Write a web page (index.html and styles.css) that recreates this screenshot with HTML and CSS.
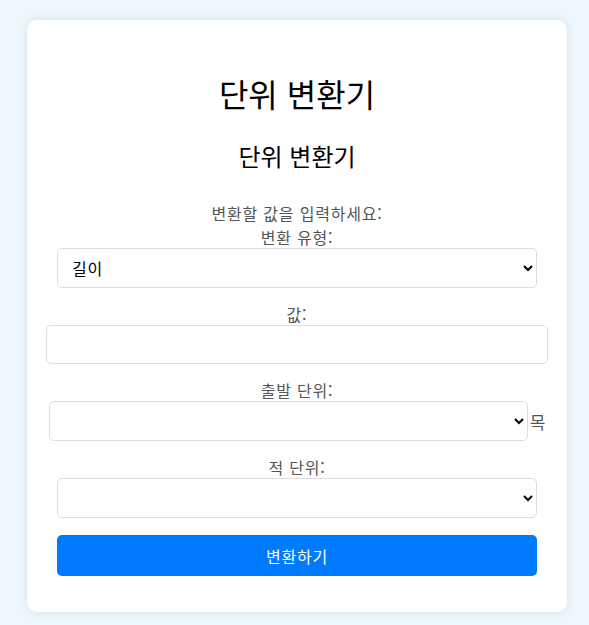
FILE: index.html
```html
<!DOCTYPE html>
<html lang="ko">
<head>
    <meta charset="UTF-8">
    <meta name="viewport" content="width=device-width, initial-scale=1.0">
    <title>단위 변환기</title>
    <link rel="stylesheet" href="styles.css">
</head>
<body>
    <div class="container">
        <h1>단위 변환기</h1>
        <h2>단위 변환기</h2>
        <form class="converter">
            <p class="intro">변환할 값을 입력하세요:</p>
            <label for="type">변환 유형:</label>
            <select id="type" class="field">
                <option>길이</option>
                <option>무게</option>
                <option>온도</option>
            </select>
            <label for="value">값:</label>
            <input type="text" id="value" class="field-wide">
            <label for="from">출발 단위:</label>
            <div class="unit-row">
                <select id="from" class="field"></select>
                <span class="stray">목</span>
            </div>
            <label for="to">적 단위:</label>
            <select id="to" class="field"></select>
            <button type="button" class="convert">변환하기</button>
        </form>
    </div>
</body>
</html>
```

FILE: styles.css
```css
body {
    font-family: "Noto Sans CJK KR", "Noto Sans", sans-serif;
    margin: 0;
    padding: 20px 0 14px;
    background-color: #eef6fe;
    color: #000;
}
.container {
    width: 540px;
    box-sizing: border-box;
    margin-left: 27px;
    padding: 30px;
    background: #ffffff;
    border-radius: 10px;
    box-shadow: 0 0 10px rgba(0, 0, 0, 0.1);
    text-align: center;
}
h1 {
    font-size: 32px;
    font-weight: normal;
    line-height: 38px;
    margin: 24px 0 0;
}
h2 {
    font-size: 24px;
    font-weight: normal;
    line-height: 29px;
    margin: 29px 0 0;
}
.converter {
    display: flex;
    flex-direction: column;
    align-items: center;
    margin-top: 32px;
}
.intro {
    margin: 0 0 2px;
    line-height: 22px;
    font-size: 16px;
    letter-spacing: 0.8px;
    color: #555;
}
label {
    line-height: 22px;
    font-size: 16px;
    letter-spacing: 0.8px;
    color: #555;
}
.field {
    width: 480px;
    height: 40px;
    box-sizing: border-box;
    padding: 0 10px;
    border: 1px solid #ddd;
    border-radius: 5px;
    background: #fff;
    font-family: inherit;
    font-size: 16px;
    letter-spacing: 0.8px;
    color: #000;
    margin-bottom: 15px;
}
.field-wide {
    width: 502px;
    height: 39px;
    box-sizing: border-box;
    flex-shrink: 0;
    padding: 10px;
    border: 1px solid #ddd;
    border-radius: 5px;
    font-family: inherit;
    font-size: 16px;
    margin-bottom: 15px;
}
.unit-row {
    display: flex;
    align-items: center;
    margin-bottom: 15px;
}
.unit-row .field {
    width: 479px;
    margin-bottom: 0;
}
.stray {
    margin-left: 2px;
    font-size: 17px;
    color: #555;
}
.convert {
    width: 480px;
    height: 41px;
    margin: 2px 0 6px;
    border: none;
    border-radius: 5px;
    background-color: #007bff;
    color: #ffffff;
    font-family: inherit;
    font-size: 16px;
    letter-spacing: 0.8px;
}
```
